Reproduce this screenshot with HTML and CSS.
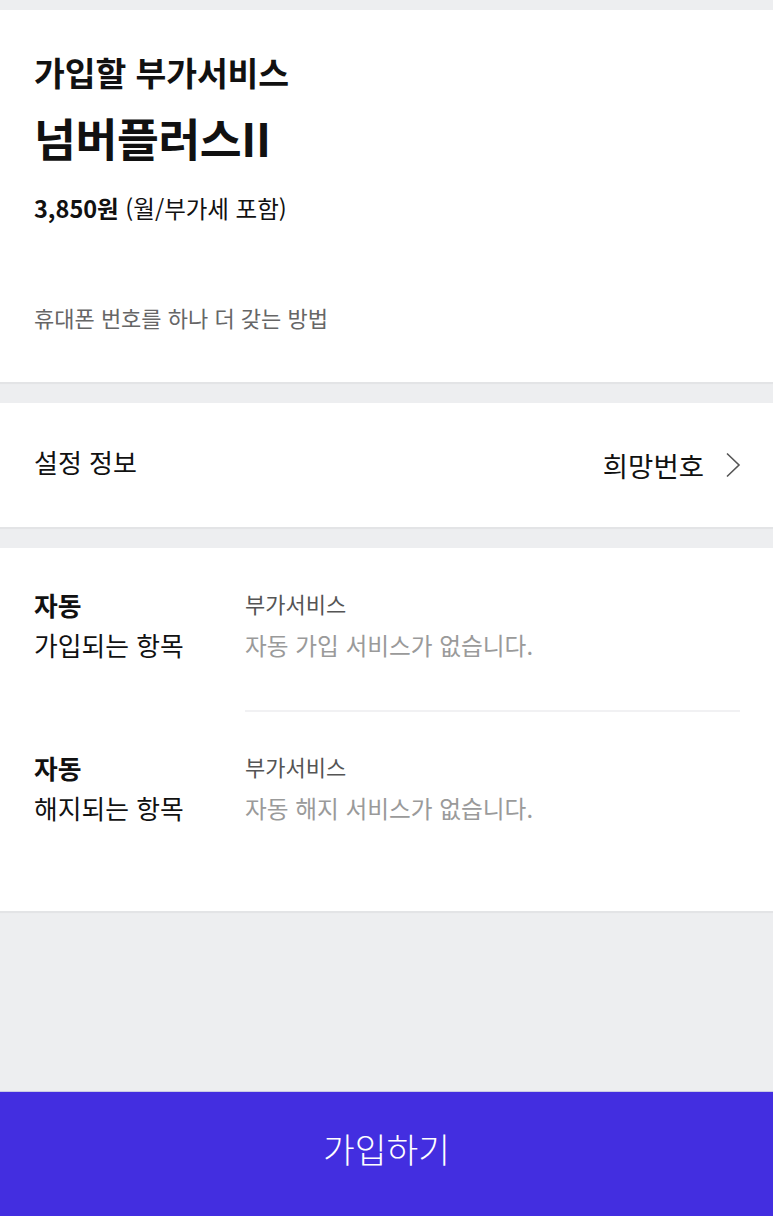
FILE: index.html
```html
<!DOCTYPE html>
<html lang="ko">
<head>
    <meta charset="UTF-8">
    <title>부가서비스 가입</title>
    <link rel="stylesheet" href="styles.css">
</head>
<body>
    <div class="page">
        <div class="section intro">
            <p class="intro-label">가입할 부가서비스</p>
            <h1 class="intro-name">넘버플러스II</h1>
            <p class="intro-price"><b>3,850원</b> (월/부가세 포함)</p>
            <p class="intro-desc">휴대폰 번호를 하나 더 갖는 방법</p>
        </div>

        <div class="section setting">
            <span class="setting-label">설정 정보</span>
            <a class="setting-value">희망번호
                <svg class="chevron" width="16" height="26" viewBox="0 0 16 26">
                    <path d="M2 1.5 L14 13 L2 24.5" fill="none" stroke="#555" stroke-width="1.6"/>
                </svg>
            </a>
        </div>

        <div class="section auto">
            <div class="auto-row">
                <div class="auto-title"><b>자동</b><br>가입되는 항목</div>
                <div class="auto-body">
                    <p class="auto-kind">부가서비스</p>
                    <p class="auto-empty">자동 가입 서비스가 없습니다.</p>
                </div>
            </div>
            <div class="auto-row">
                <div class="auto-title"><b>자동</b><br>해지되는 항목</div>
                <div class="auto-body">
                    <p class="auto-kind">부가서비스</p>
                    <p class="auto-empty">자동 해지 서비스가 없습니다.</p>
                </div>
            </div>
        </div>

        <a class="join-btn">가입하기</a>
    </div>
</body>
</html>
```

FILE: styles.css
```css
*{
    margin: 0;
    padding: 0;
}
body{
    background-color: #edeef0;
    font-family: "Noto Sans CJK KR", "Noto Sans", sans-serif;
    color: #111;
}
.page{
    display: flex;
    flex-direction: column;
    min-height: 1216px;
    padding-top: 10px;
    box-sizing: border-box;
}
.section{
    background-color: #fff;
    box-shadow: 0 2px 1px rgba(0,0,0,.04);
    margin-bottom: 21px;
}
.intro{
    padding: 39px 34px 49px;
}
.intro-label{
    font-size: 33.5px;
    font-weight: 700;
    line-height: 46px;
    letter-spacing: -0.1px;
}
.intro-name{
    margin-top: 13px;
    font-size: 45.5px;
    font-weight: 700;
    line-height: 58px;
    letter-spacing: -0.4px;
}
.intro-price{
    margin-top: 26px;
    font-size: 23.5px;
    line-height: 32px;
    letter-spacing: 0;
}
.intro-desc{
    margin-top: 77px;
    font-size: 22px;
    line-height: 32px;
    color: #666;
    letter-spacing: 0;
}
.setting{
    display: flex;
    justify-content: space-between;
    align-items: center;
    height: 124px;
    padding: 0 32px 0 34px;
}
.setting-label{
    font-size: 26px;
    margin-top: -8px;
}
.setting-value{
    display: flex;
    align-items: center;
    gap: 21px;
    font-size: 27.5px;
    color: #111;
}
.chevron{
    display: block;
}
.auto{
    padding: 37px 33px 83px 34px;
    margin-bottom: 0;
}
.auto-row{
    display: flex;
}
.auto-row + .auto-row{
    padding-top: 36px;
}
.auto-title{
    width: 211px;
    flex-shrink: 0;
    font-size: 25.8px;
    line-height: 40px;
}
.auto-body{
    flex: 1;
}
.auto-row:first-child .auto-body{
    padding-bottom: 45px;
    border-bottom: 2px solid #f1f1f3;
}
.auto-kind{
    font-size: 22px;
    line-height: 36px;
    color: #555;
}
.auto-empty{
    margin-top: 4px;
    font-size: 23.7px;
    line-height: 40px;
    color: #9a9a9a;
}
.join-btn{
    margin-top: auto;
    display: block;
    height: 125px;
    line-height: 112px;
    border-top: 1px solid #c9cbe4;
    background-color: #432ee0;
    color: #fff;
    text-align: center;
    font-size: 34.5px;
    font-weight: 300;
    box-sizing: border-box;
}
```
